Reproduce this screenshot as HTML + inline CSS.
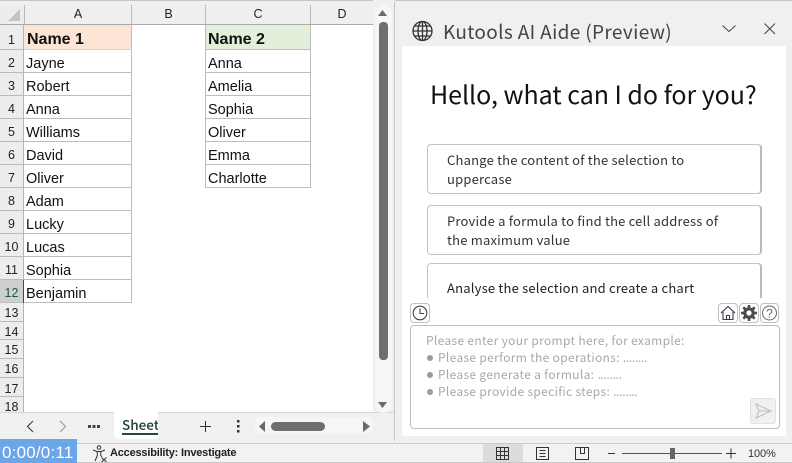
<!DOCTYPE html>
<html><head><meta charset="utf-8">
<style>
*{box-sizing:border-box;margin:0;padding:0}
html,body{width:792px;height:463px;overflow:hidden;background:#f0f0f0}
body{position:relative;font-family:"Liberation Sans",sans-serif;color:#000}
.a{position:absolute}
.h{position:absolute;background:#ededed;font-size:12.5px;color:#222;text-align:center}
.t{position:absolute;white-space:nowrap}
.c{position:absolute;font-size:14.5px;line-height:23px;padding-left:2px;white-space:nowrap;border-bottom:1px solid #bdbdbd;border-right:1px solid #bdbdbd;background:#fff;color:#111}
.s{font-family:"Noto Sans CJK JP","Liberation Sans",sans-serif}
.card{position:absolute;left:427px;width:335px;border:1px solid #c4c4c4;border-right:2px solid #bbb;border-radius:4px;background:#fff;font-size:13px;color:#333;line-height:19px;padding-left:19px;letter-spacing:.2px;font-family:"Noto Sans CJK JP","Liberation Sans",sans-serif}
.ib{position:absolute;top:303px;height:20px;border:1px solid #c0c0c0;border-radius:4px;background:#fff}
.ph{position:absolute;left:426px;font-size:12px;color:#a8a8a8;white-space:nowrap;letter-spacing:.32px;font-family:"Noto Sans CJK JP","Liberation Sans",sans-serif}
.ph i{font-style:normal;letter-spacing:-.3px}
.d{position:absolute;left:427px;width:6px;height:6px;border-radius:50%;background:#9a9a9a}
</style></head><body>
<!-- top edge -->
<div class="a" style="left:0;top:0;width:792px;height:1px;background:#c6c6c6"></div>

<!-- sheet area -->
<div class="a" style="left:24px;top:25px;width:349px;height:387px;background:#fff"></div>

<!-- column headers -->
<div class="h" style="left:0;top:5px;width:373px;height:20px;border-bottom:1px solid #a9a9a9"></div>
<div class="h" style="left:24px;top:5px;width:108px;height:19px;line-height:19px;border-left:1px solid #bbb;border-right:1px solid #bbb;background:#efefef">A</div>
<div class="h" style="left:132px;top:5px;width:74px;height:19px;line-height:19px;background:#efefef;border-right:1px solid #bbb">B</div>
<div class="h" style="left:206px;top:5px;width:105px;height:19px;line-height:19px;background:#efefef;border-right:1px solid #bbb">C</div>
<div class="h" style="left:311px;top:5px;width:62px;height:19px;line-height:19px;background:#efefef">D</div>
<svg class="a" style="left:0;top:5px" width="24" height="20"><polygon points="8,16 20,16 20,4" fill="#c4c4c4"/></svg>

<!-- row headers -->
<div class="a" style="left:0;top:25px;width:24px;height:387px;background:#ededed;border-right:1px solid #b5b5b5"></div>
<div class="h" style="left:0;top:25px;width:23px;height:25px;line-height:31px;border-bottom:1px solid #bbb">1</div>
<div class="h" style="left:0;top:50px;width:23px;height:23px;line-height:27px;border-bottom:1px solid #bbb">2</div>
<div class="h" style="left:0;top:73px;width:23px;height:23px;line-height:27px;border-bottom:1px solid #bbb">3</div>
<div class="h" style="left:0;top:96px;width:23px;height:23px;line-height:27px;border-bottom:1px solid #bbb">4</div>
<div class="h" style="left:0;top:119px;width:23px;height:23px;line-height:27px;border-bottom:1px solid #bbb">5</div>
<div class="h" style="left:0;top:142px;width:23px;height:23px;line-height:27px;border-bottom:1px solid #bbb">6</div>
<div class="h" style="left:0;top:165px;width:23px;height:23px;line-height:27px;border-bottom:1px solid #bbb">7</div>
<div class="h" style="left:0;top:188px;width:23px;height:23px;line-height:27px;border-bottom:1px solid #bbb">8</div>
<div class="h" style="left:0;top:211px;width:23px;height:23px;line-height:27px;border-bottom:1px solid #bbb">9</div>
<div class="h" style="left:0;top:234px;width:23px;height:23px;line-height:27px;border-bottom:1px solid #bbb">10</div>
<div class="h" style="left:0;top:257px;width:23px;height:23px;line-height:27px;border-bottom:1px solid #bbb">11</div>
<div class="h" style="left:0;top:280px;width:23px;height:23px;line-height:27px;border-bottom:1px solid #bbb;background:#cfcfcf;color:#1d5a3c">12</div>
<div class="h" style="left:0;top:303px;width:23px;height:19px;line-height:20px;border-bottom:1px solid #bbb">13</div>
<div class="h" style="left:0;top:322px;width:23px;height:18px;line-height:20px;border-bottom:1px solid #bbb">14</div>
<div class="h" style="left:0;top:340px;width:23px;height:19px;line-height:21px;border-bottom:1px solid #bbb">15</div>
<div class="h" style="left:0;top:359px;width:23px;height:19px;line-height:20px;border-bottom:1px solid #bbb">16</div>
<div class="h" style="left:0;top:378px;width:23px;height:19px;line-height:22px;border-bottom:1px solid #bbb">17</div>
<div class="h" style="left:0;top:397px;width:23px;height:15px;line-height:21px;overflow:hidden">18</div>
<div class="a" style="left:23px;top:280px;width:2px;height:23px;background:#1f5c40"></div>

<!-- column A -->
<div class="c" style="left:24px;top:25px;width:108px;height:25px;background:#fce4d6;font-weight:bold;font-size:16px;line-height:29px;padding-left:3px;border-bottom:1px solid #d2d2d2;border-right:1px solid #bdbdbd">Name 1</div>
<div class="c" style="left:24px;top:50px;width:108px;height:23px;line-height:28px">Jayne</div>
<div class="c" style="left:24px;top:73px;width:108px;height:23px;line-height:28px">Robert</div>
<div class="c" style="left:24px;top:96px;width:108px;height:23px;line-height:28px">Anna</div>
<div class="c" style="left:24px;top:119px;width:108px;height:23px;line-height:28px">Williams</div>
<div class="c" style="left:24px;top:142px;width:108px;height:23px;line-height:28px">David</div>
<div class="c" style="left:24px;top:165px;width:108px;height:23px;line-height:28px">Oliver</div>
<div class="c" style="left:24px;top:188px;width:108px;height:23px;line-height:28px">Adam</div>
<div class="c" style="left:24px;top:211px;width:108px;height:23px;line-height:28px">Lucky</div>
<div class="c" style="left:24px;top:234px;width:108px;height:23px;line-height:28px">Lucas</div>
<div class="c" style="left:24px;top:257px;width:108px;height:23px;line-height:28px">Sophia</div>
<div class="c" style="left:24px;top:280px;width:108px;height:23px;line-height:28px">Benjamin</div>

<!-- column C -->
<div class="c" style="left:205px;top:25px;width:106px;height:25px;background:#e2efda;font-weight:bold;font-size:16px;line-height:29px;border-left:1px solid #bdbdbd">Name 2</div>
<div class="c" style="left:205px;top:50px;width:106px;height:23px;line-height:28px;border-left:1px solid #bdbdbd">Anna</div>
<div class="c" style="left:205px;top:73px;width:106px;height:23px;line-height:28px;border-left:1px solid #bdbdbd">Amelia</div>
<div class="c" style="left:205px;top:96px;width:106px;height:23px;line-height:28px;border-left:1px solid #bdbdbd">Sophia</div>
<div class="c" style="left:205px;top:119px;width:106px;height:23px;line-height:28px;border-left:1px solid #bdbdbd">Oliver</div>
<div class="c" style="left:205px;top:142px;width:106px;height:23px;line-height:28px;border-left:1px solid #bdbdbd">Emma</div>
<div class="c" style="left:205px;top:165px;width:106px;height:23px;line-height:28px;border-left:1px solid #bdbdbd">Charlotte</div>

<!-- tab bar -->
<div class="a" style="left:0;top:412px;width:395px;height:31px;background:#f0f0f0;border-top:1px solid #d6d6d6"></div>
<svg class="a" style="left:0;top:412px" width="373" height="24">
<path d="M33 9 L27.500 14.500 L33 20" fill="none" stroke="#444" stroke-width="1.200"/>
<path d="M60 9 L65.500 14.500 L60 20" fill="none" stroke="#999" stroke-width="1.200"/>
<rect x="88" y="13" width="3" height="3" fill="#444"/><rect x="92.500" y="13" width="3" height="3" fill="#444"/><rect x="97" y="13" width="3" height="3" fill="#444"/>
<path d="M200 14.500 H211 M205.500 9 V20" stroke="#333" stroke-width="1"/>
<rect x="237" y="8" width="2.500" height="2.500" fill="#333"/><rect x="237" y="13" width="2.500" height="2.500" fill="#333"/><rect x="237" y="18" width="2.500" height="2.500" fill="#333"/>
<rect x="254" y="5" width="121" height="17" rx="8" fill="#f6f6f6"/>
<polygon points="265,9 265,20 259,14.500" fill="#6a6a6a"/>
<rect x="271" y="10" width="54" height="9" rx="4.500" fill="#6f6f6f"/>
<polygon points="363,9 363,20 370,14.500" fill="#6a6a6a"/>
</svg>
<div class="a" style="left:114px;top:412px;width:44px;height:27px;background:#fff;border-radius:0 0 0 5px;overflow:hidden"><div class="t s" style="left:8px;top:2px;font-size:13.5px;line-height:20px;font-weight:500;color:#1f3d33">Sheet</div></div>
<div class="a" style="left:122px;top:433px;width:36px;height:2px;background:#1f4d3b"></div>

<!-- vertical scrollbar -->
<div class="a" style="left:373px;top:0;width:22px;height:412px;background:#f0f0f0"></div>
<div class="a" style="left:394px;top:1px;width:1px;height:440px;background:#c6c6c6"></div>
<div class="a" style="left:375px;top:5px;width:17px;height:408px;background:#f6f6f6;border-radius:8px"></div>
<svg class="a" style="left:373px;top:5px" width="20" height="410">
<polygon points="5,11 14,11 9.5,5" fill="#6a6a6a"/>
<rect x="6" y="17" width="9" height="338" rx="4" fill="#6f6f6f"/>
<polygon points="5,397 14,397 9.5,403" fill="#6a6a6a"/>
</svg>

<!-- AI pane -->
<div class="a" style="left:395px;top:1px;width:397px;height:442px;background:#f0f0f0"></div>
<svg class="a" style="left:412px;top:20px" width="24" height="24" fill="none" stroke="#333" stroke-width="1.300">
<circle cx="10.500" cy="11" r="9.500"/>
<ellipse cx="10.500" cy="11" rx="4.500" ry="9.500"/>
<path d="M10.500 1.500V20.500M1 11H20M2.500 6H18.500M2.500 16H18.500"/>
</svg>
<div class="t s" style="left:443px;top:18px;font-size:19px;line-height:28px;color:#444;letter-spacing:.35px">Kutools AI Aide (Preview)</div>
<svg class="a" style="left:720px;top:20px" width="60" height="18" fill="none" stroke="#444" stroke-width="1">
<path d="M2.500 5.500 L9 11.500 L15.500 5.500"/>
<path d="M44.500 3.500 L55 14 M55 3.500 L44.500 14"/>
</svg>
<div class="a" style="left:402px;top:46px;width:384px;height:390px;background:#fff"></div>
<div class="t s" style="left:430px;top:75px;font-size:25px;line-height:38px;color:#111;letter-spacing:-.03px">Hello, what can I do for you?</div>

<div class="card" style="top:144px;height:50px;padding-top:5px">Change the content of the selection to<br>uppercase</div>
<div class="card" style="top:205px;height:50px;padding-top:5px">Provide a formula to find the cell address of<br>the maximum value</div>
<div class="card" style="top:263px;height:60px;padding-top:14px;color:#222;border-bottom:none">Analyse the selection and create a chart</div>
<div class="a" style="left:404px;top:298px;width:380px;height:27px;background:#fff"></div>

<!-- toolbar -->
<div class="ib" style="left:410px;width:20px"></div>
<svg class="a" style="left:410px;top:303px" width="20" height="20" fill="none" stroke="#444" stroke-width="1.100"><circle cx="10" cy="10" r="6.800"/><path d="M10 5.500V10.500H14"/></svg>
<div class="ib" style="left:718px;width:20px"></div>
<svg class="a" style="left:718px;top:303px" width="20" height="20" fill="none" stroke="#3a3a50" stroke-width="1.100"><path d="M3 10 L10 3.500 L17 10 M5 8.500V16.500H15V8.500 M8.500 16.500V12.500H11.500V16.500"/></svg>
<div class="ib" style="left:739px;width:20px"></div>
<svg class="a" style="left:739px;top:303px" width="20" height="20"><path d="M10 2V18M2 10H18M4.300 4.300L15.700 15.700M15.700 4.300L4.300 15.700" stroke="#4c4c4c" stroke-width="2.600"/><circle cx="10" cy="10" r="5.800" fill="#4c4c4c"/><circle cx="10" cy="10" r="2.600" fill="#fff"/></svg>
<div class="ib" style="left:760px;width:19px"></div>
<svg class="a" style="left:760px;top:303px" width="19" height="20" fill="none" stroke="#666" stroke-width="1"><circle cx="9.500" cy="10" r="7"/><text x="9.500" y="14.500" font-size="12" font-family="Liberation Sans" fill="#666" stroke="none" text-anchor="middle">?</text></svg>

<!-- prompt box -->
<div class="a" style="left:410px;top:325px;width:370px;height:104px;border:1px solid #bdbdbd;border-radius:4px;background:#fff"></div>
<div class="ph" style="top:332px;line-height:18px">Please enter your prompt here, for example:</div>
<div class="d" style="top:355px"></div><div class="ph" style="left:438px;top:349px;line-height:18px">Please perform the operations: <i>........</i></div>
<div class="d" style="top:372px"></div><div class="ph" style="left:438px;top:366px;line-height:18px">Please generate a formula: <i>........</i></div>
<div class="d" style="top:389px"></div><div class="ph" style="left:438px;top:383px;line-height:18px">Please provide specific steps: <i>........</i></div>
<div class="a" style="left:750px;top:398px;width:26px;height:26px;background:#f0f0f0;border:1px solid #e2e2e2;border-radius:3px"></div>
<svg class="a" style="left:750px;top:398px" width="26" height="26" fill="none" stroke="#c0c0c0" stroke-width="1.100"><path d="M6 6 L21 13 L6 20 L9 13 Z M9 13 H21"/></svg>

<!-- status bar -->
<div class="a" style="left:0;top:443px;width:792px;height:1px;background:#cacaca"></div>
<div class="a" style="left:0;top:444px;width:792px;height:19px;background:#f2f2f2"></div>
<div class="a" style="left:0;top:462px;width:792px;height:1px;background:#c8c8c8"></div>
<div class="a" style="left:0;top:439px;width:77px;height:24px;background:#6aa6e8"></div>
<div class="t" style="left:2px;top:441px;font-size:17px;line-height:23px;color:#fff;font-family:'Liberation Sans',sans-serif;letter-spacing:.2px">0:00/0:11</div>
<svg class="a" style="left:91px;top:445px" width="18" height="18" fill="none" stroke="#333" stroke-width="1"><circle cx="8" cy="2.500" r="1.800"/><path d="M2 5 L6 6.500 H10 L14 5 M6 6.500 L6.500 10 L4 16 M10 6.500 L9.500 10 L11 12"/><path d="M10.500 12.500 L15.500 17 M15.500 12.500 L10.500 17"/></svg>
<div class="t" style="left:110px;top:446px;font-size:11px;line-height:15px;font-weight:bold;color:#222;letter-spacing:-.2px">Accessibility: Investigate</div>
<div class="a" style="left:483px;top:444px;width:40px;height:18px;background:#dcdcdc"></div>
<svg class="a" style="left:490px;top:444px" width="302" height="19" fill="none" stroke="#333" stroke-width="1">
<path d="M6.500 3.500H18.500V15.500H6.500Z M6.500 7.500H18.500M6.500 11.500H18.500M10.500 3.500V15.500M14.500 3.500V15.500"/>
<path d="M46.500 3.500H58.500V15.500H46.500Z M49.500 6.500H55.500M49.500 9.500H55.500M49.500 12.500H55.500"/>
<path d="M85.500 3.500H98.500V15.500H85.500Z M90.500 3.500V9.500H94.500V3.500"/>
<path d="M118 9.500H125"/>
<path d="M132 9.500H232" stroke="#555"/>
<rect x="180" y="4" width="5" height="11" fill="#666" stroke="none"/>
<path d="M236 9.500H246M241 4.500V14.500"/>
</svg>
<div class="t" style="left:748px;top:447px;font-size:11px;line-height:15px;color:#333;letter-spacing:-.1px">100%</div>
</body></html>
